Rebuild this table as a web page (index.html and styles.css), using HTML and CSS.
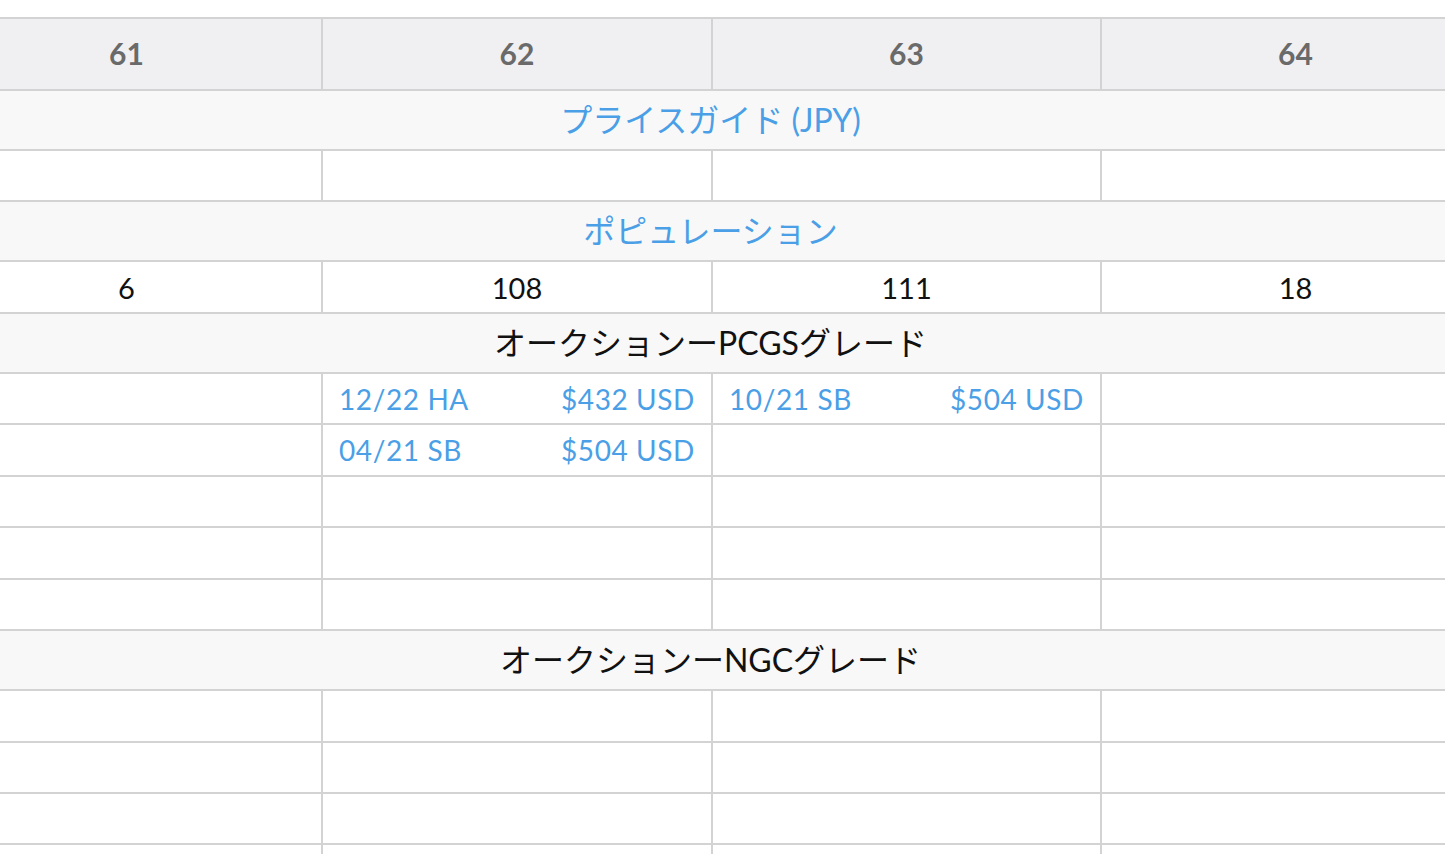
FILE: index.html
```html
<!DOCTYPE html>
<html lang="ja">
<head>
<meta charset="utf-8">
<title>Grades</title>
<link rel="stylesheet" href="styles.css">
</head>
<body>
<div class="viewport">
  <div class="table">
    <div class="row head">
      <div class="cell">61</div>
      <div class="cell">62</div>
      <div class="cell">63</div>
      <div class="cell">64</div>
    </div>
    <div class="row section"><div class="span blue">プライスガイド (JPY)</div></div>
    <div class="row data">
      <div class="cell"></div><div class="cell"></div><div class="cell"></div><div class="cell"></div>
    </div>
    <div class="row section"><div class="span blue">ポピュレーション</div></div>
    <div class="row data">
      <div class="cell">6</div><div class="cell">108</div><div class="cell">111</div><div class="cell">18</div>
    </div>
    <div class="row section"><div class="span">オークションーPCGSグレード</div></div>
    <div class="row data">
      <div class="cell"></div>
      <div class="cell sale"><span>12/22 HA</span><span>$432 USD</span></div>
      <div class="cell sale"><span>10/21 SB</span><span>$504 USD</span></div>
      <div class="cell"></div>
    </div>
    <div class="row data">
      <div class="cell"></div>
      <div class="cell sale"><span>04/21 SB</span><span>$504 USD</span></div>
      <div class="cell"></div>
      <div class="cell"></div>
    </div>
    <div class="row data">
      <div class="cell"></div><div class="cell"></div><div class="cell"></div><div class="cell"></div>
    </div>
    <div class="row data">
      <div class="cell"></div><div class="cell"></div><div class="cell"></div><div class="cell"></div>
    </div>
    <div class="row data">
      <div class="cell"></div><div class="cell"></div><div class="cell"></div><div class="cell"></div>
    </div>
    <div class="row section"><div class="span">オークションーNGCグレード</div></div>
    <div class="row data">
      <div class="cell"></div><div class="cell"></div><div class="cell"></div><div class="cell"></div>
    </div>
    <div class="row data">
      <div class="cell"></div><div class="cell"></div><div class="cell"></div><div class="cell"></div>
    </div>
    <div class="row data">
      <div class="cell"></div><div class="cell"></div><div class="cell"></div><div class="cell"></div>
    </div>
    <div class="row data">
      <div class="cell"></div><div class="cell"></div><div class="cell"></div><div class="cell"></div>
    </div>
  </div>
</div>
</body>
</html>
```

FILE: styles.css
```css
* { box-sizing: border-box; }
html, body { margin: 0; padding: 0; background: #fff; }
body {
  font-family: Lato, "Noto Sans CJK JP", sans-serif;
  color: #111;
  height: 854px;
  overflow: hidden;
}
.viewport {
  padding-top: 17px;
  width: 1445px;
  overflow: hidden;
}
.table {
  width: 1557px;
  margin-left: -68px;
  border-top: 2px solid #d3d3d3;
}
.row {
  display: grid;
  grid-template-columns: 389px 390px 389px 389px;
  border-bottom: 2px solid #d3d3d3;
}
.cell {
  display: flex;
  align-items: center;
  justify-content: center;
  font-size: 29px;
}
.cell + .cell { border-left: 2px solid #d3d3d3; }
.head { height: 72px; background: #f0f0f2; }
.head .cell { font-weight: 700; color: #6a6a6a; font-size: 30px; padding-bottom: 2px; }
.section { height: 60px; background: #f8f8f8; }
.span {
  grid-column: 1 / -1;
  display: flex;
  align-items: center;
  justify-content: center;
  font-size: 32px;
  color: #111;
  padding-bottom: 4px;
}
.blue { color: #4a9fe6; }
.data { height: 51.45px; }
.sale {
  justify-content: space-between;
  padding: 0 16px 0 16px;
  color: #4a9fe6;
  font-size: 28px;
  letter-spacing: 0.6px;
}
```
